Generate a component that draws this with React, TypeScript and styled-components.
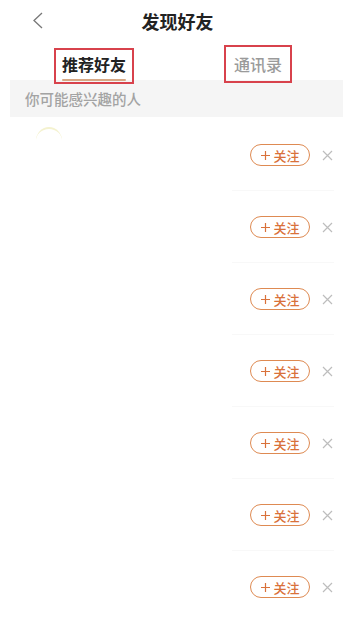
import React from "react"
import styled, { createGlobalStyle } from "styled-components"

const GlobalStyle = createGlobalStyle`
	body {
		margin: 0;
		background: #fff;
		font-family: "Noto Sans CJK SC", "Noto Sans", sans-serif;
	}
`

const Page = styled.div`
	width: 352px;
	height: 635px;
	overflow: hidden;
	background: #fff;
	display: flex;
	flex-direction: column;
`

const Header = styled.div`
	height: 42px;
	display: flex;
	align-items: center;
	padding-left: 32px;
`

const Back = styled.svg`
	flex: none;
	margin-top: -1px;
`

const Title = styled.div`
	flex: 1;
	text-align: center;
	font-size: 18px;
	font-weight: 700;
	color: #222;
	line-height: 1;
	margin-right: 41px;
`

const Tabs = styled.div`
	height: 38px;
	display: flex;
	align-items: flex-start;
	padding-left: 54px;
	gap: 90px;
	position: relative;
	z-index: 1;
`

const Tab = styled.div<{ $active?: boolean }>`
	margin-top: ${(p) => (p.$active ? 6 : 3)}px;
	width: ${(p) => (p.$active ? 80 : 68)}px;
	height: ${(p) => (p.$active ? 36 : 38)}px;
	box-sizing: border-box;
	border: 2px solid #d8424c;
	display: flex;
	flex-direction: column;
	align-items: center;
	padding-top: ${(p) => (p.$active ? 4 : 7)}px;
	font-size: 16px;
	font-weight: ${(p) => (p.$active ? 700 : 500)};
	color: ${(p) => (p.$active ? "#222" : "#9a9a9a")};
	line-height: 20px;
`

const Underline = styled.div`
	width: 64px;
	height: 2px;
	border-radius: 1px;
	background: #d6a784;
	margin-top: 5px;
`

const Band = styled.div`
	margin: 0 9px 0 10px;
	height: 37px;
	background: #f5f5f5;
	display: flex;
	align-items: center;
	padding-left: 15px;
	font-size: 14.5px;
	font-weight: 500;
	color: #a3a3a3;
`

const List = styled.div`
	padding-top: 2px;
`

const Row = styled.div<{ $last?: boolean }>`
	height: 72px;
	display: flex;
	align-items: center;
	position: relative;
	padding-left: 36px;
	box-sizing: border-box;

	&::after {
		content: "";
		display: ${(p) => (p.$last ? "none" : "block")};
		position: absolute;
		left: 232px;
		right: 18px;
		bottom: 0;
		height: 1px;
		background: #f8f8f8;
	}
`

const Avatar = styled.div`
	width: 26px;
	height: 26px;
	border-radius: 50%;
	border-top: 2px solid #f4f2cf;
	align-self: flex-start;
	margin-top: 8px;
`

const Spacer = styled.div`
	flex: 1;
`

const Follow = styled.div`
	width: 60px;
	height: 22px;
	box-sizing: border-box;
	border: 1px solid #de8a52;
	border-radius: 11px;
	display: flex;
	align-items: center;
	justify-content: center;
	gap: 2px;
	font-size: 13px;
	font-weight: 500;
	color: #d9713a;
	line-height: 1;
`

const Plus = styled.svg`
	flex: none;
`

const Close = styled.svg`
	margin: 0 19px 0 12px;
`

const rows = [0, 1, 2, 3, 4, 5, 6]

export default function App() {
	return (
		<Page>
			<GlobalStyle />
			<Header>
				<Back width="12" height="17" viewBox="0 0 12 17">
					<path d="M10 1 L2 8.5 L10 16" fill="none" stroke="#777" strokeWidth="1.3" />
				</Back>
				<Title>发现好友</Title>
			</Header>
			<Tabs>
				<Tab $active>
					推荐好友
					<Underline />
				</Tab>
				<Tab>通讯录</Tab>
			</Tabs>
			<Band>你可能感兴趣的人</Band>
			<List>
				{rows.map((i) => (
					<Row key={i} $last={i === rows.length - 1}>
						{i === 0 ? <Avatar /> : null}
						<Spacer />
						<Follow>
							<Plus width="11" height="11" viewBox="0 0 11 11">
								<path d="M5.5 1 V10 M1 5.5 H10" stroke="#d9713a" strokeWidth="1.2" />
							</Plus>
							关注
						</Follow>
						<Close width="11" height="11" viewBox="0 0 11 11">
							<path d="M1 1 L10 10 M10 1 L1 10" stroke="#bdbdbd" strokeWidth="1.2" />
						</Close>
					</Row>
				))}
			</List>
		</Page>
	)
}
